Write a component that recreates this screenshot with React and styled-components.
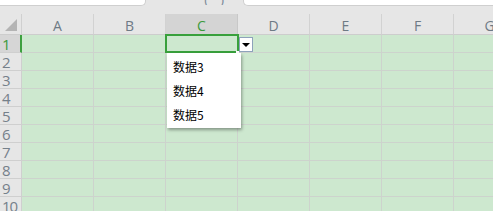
import React from "react";
import styled, { createGlobalStyle } from "styled-components";

const GlobalStyle = createGlobalStyle`
  html, body {
    margin: 0;
    padding: 0;
    background: #e6e6e6;
  }
`;

const columns = ["A", "B", "C", "D", "E", "F", "G"];
const rows = [1, 2, 3, 4, 5, 6, 7, 8, 9, 10];
const options = ["数据3", "数据4", "数据5"];

function App() {
  return (
    <Page>
      <GlobalStyle />
      <TopBar>
        <NameBox />
        <FxArea>( )</FxArea>
        <FormulaBox />
      </TopBar>
      <Sheet>
        <Corner>
          <CornerTriangle />
        </Corner>
        {columns.map((c) => (
          <ColHeader key={c} active={c === "C"}>
            {c}
          </ColHeader>
        ))}
        {rows.map((r) => (
          <React.Fragment key={r}>
            <RowHeader active={r === 1}>{r}</RowHeader>
            {columns.map((c) => (
              <Cell key={c}>
                {r === 1 && c === "C" && (
                  <>
                    <Selection>
                      <FillHandle />
                    </Selection>
                    <DropButton>
                      <Arrow />
                    </DropButton>
                    <DropList>
                      {options.map((o) => (
                        <DropItem key={o}>{o}</DropItem>
                      ))}
                    </DropList>
                  </>
                )}
              </Cell>
            ))}
          </React.Fragment>
        ))}
      </Sheet>
    </Page>
  );
}

export default App;

const Page = styled.div`
  width: 493px;
  height: 211px;
  overflow: hidden;
  background: #e6e6e6;
  font-family: "Liberation Sans", Arial, sans-serif;
`;

const TopBar = styled.div`
  display: flex;
  height: 14px;
  align-items: flex-start;
`;

const NameBox = styled.div`
  width: 145px;
  height: 5px;
  background: #fff;
  border-right: 1px solid #cfcfcf;
  border-bottom: 1px solid #cfcfcf;
  border-bottom-right-radius: 5px;
`;

const FxArea = styled.div`
  width: 97px;
  height: 5px;
  overflow: hidden;
  color: #7b8a99;
  font-size: 13px;
  line-height: 0px;
  padding-left: 58px;
  box-sizing: border-box;
  letter-spacing: 4px;
`;

const FormulaBox = styled.div`
  flex: 1;
  height: 5px;
  background: #fff;
  border-left: 1px solid #cfcfcf;
  border-bottom: 1px solid #cfcfcf;
  border-bottom-left-radius: 5px;
`;

const Sheet = styled.div`
  display: grid;
  grid-template-columns: 22px repeat(7, 72px);
  grid-template-rows: 21px repeat(10, 18px);
`;

const Corner = styled.div`
  position: relative;
  background: #e6e6e6;
  border-right: 1px solid #d0d0d0;
  border-bottom: 1px solid #cdcdcd;
  box-sizing: border-box;
`;

const CornerTriangle = styled.div`
  position: absolute;
  right: 4px;
  bottom: 3px;
  width: 0;
  height: 0;
  border-left: 12px solid transparent;
  border-bottom: 12px solid #b4b4b4;
`;

const ColHeader = styled.div`
  display: flex;
  align-items: center;
  justify-content: center;
  box-sizing: border-box;
  border-right: 1px solid ${(p) => (p.active ? "#c8c8c8" : "#d2d2d2")};
  border-bottom: 1px solid #cdcdcd;
  background: ${(p) => (p.active ? "#d4d4d4" : "#e6e6e6")};
  color: ${(p) => (p.active ? "#3c9a3c" : "#6e7a85")};
  font-family: "Open Sans", "Liberation Sans", sans-serif;
  font-size: 14px;
  padding-top: 2px;
`;

const RowHeader = styled.div`
  display: flex;
  align-items: center;
  box-sizing: border-box;
  padding-left: 2px;
  background: ${(p) => (p.active ? "#d6d6d6" : "#e6e6e6")};
  border-bottom: 1px solid #cfcfcf;
  border-right: ${(p) => (p.active ? "2px solid #3da03f" : "1px solid #cfcfcf")};
  color: ${(p) => (p.active ? "#3c9a3c" : "#75808a")};
  font-family: "Open Sans", "Liberation Sans", sans-serif;
  font-size: 15px;
  letter-spacing: -1px;
  white-space: nowrap;
`;

const Cell = styled.div`
  position: relative;
  box-sizing: border-box;
  background: #cde8cf;
  border-right: 1px solid #cdd3cd;
  border-bottom: 1px solid #cdd3cd;
`;

const Selection = styled.div`
  position: absolute;
  left: -1px;
  top: -1px;
  width: 74px;
  height: 19px;
  box-sizing: border-box;
  border: 2px solid #38a03c;
  z-index: 2;
`;

const FillHandle = styled.div`
  position: absolute;
  right: -2px;
  bottom: -2px;
  width: 3px;
  height: 2px;
  background: #fff;
`;

const DropButton = styled.div`
  position: absolute;
  left: 73px;
  top: 2px;
  width: 14px;
  height: 15px;
  box-sizing: border-box;
  background: #fff;
  border: 1px solid #8ea2bb;
  display: flex;
  align-items: center;
  justify-content: center;
  z-index: 3;
`;

const Arrow = styled.div`
  width: 0;
  height: 0;
  border-left: 4px solid transparent;
  border-right: 4px solid transparent;
  border-top: 4px solid #000;
  margin-top: 1px;
`;

const DropList = styled.div`
  position: absolute;
  left: 1px;
  top: 18px;
  width: 74px;
  padding-top: 1px;
  padding-bottom: 2px;
  background: #fff;
  box-shadow: 1px 2px 3px rgba(0, 0, 0, 0.35);
  z-index: 4;
`;

const DropItem = styled.div`
  height: 24px;
  display: flex;
  align-items: center;
  padding-left: 6px;
  font-family: "Noto Sans CJK SC", "Liberation Sans", sans-serif;
  font-size: 12px;
  color: #000;
`;
